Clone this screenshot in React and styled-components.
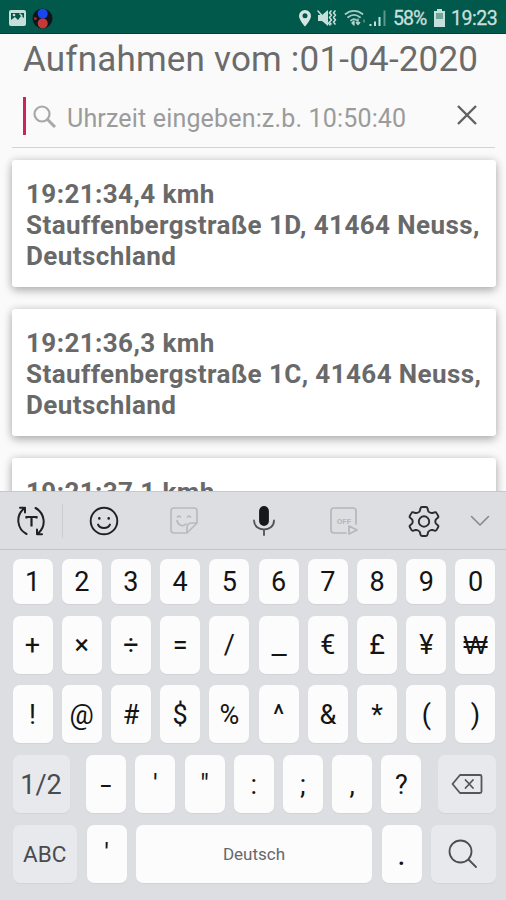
import React from "react"
import styled, { createGlobalStyle } from "styled-components"

const GlobalStyle = createGlobalStyle`
  * {
    box-sizing: border-box;
  }
  body {
    margin: 0;
    background: #fafafa;
    font-family: Roboto, "Noto Sans", sans-serif;
  }
`

const Screen = styled.div`
  width: 506px;
  height: 900px;
  display: flex;
  flex-direction: column;
  overflow: hidden;
  background: #fafafa;
`

const StatusBar = styled.header`
  flex: none;
  height: 34px;
  padding: 3px 9px 0 8px;
  display: flex;
  align-items: center;
  justify-content: space-between;
  background: #00594b;
  border-bottom: 1px solid #004439;
  color: #c9dfdb;
`

const StatusGroup = styled.div`
  display: flex;
  align-items: center;
`

const StatusText = styled.span`
  width: ${({ $width }) => $width}px;
  margin-left: ${({ $left }) => $left || 0}px;
  padding-top: 2px;
  font-size: 19.5px;
  line-height: 24px;
  letter-spacing: ${({ $spacing }) => $spacing || 0}px;
  white-space: nowrap;
  -webkit-text-stroke: 0.3px #c9dfdb;
`

const Icon = styled.svg`
  display: block;
  flex: none;
  fill: none;
  stroke-linecap: round;
  stroke-linejoin: round;
  margin-left: ${({ $left }) => $left || 0}px;
`

const Content = styled.main`
  flex: none;
  height: 457px;
  overflow: hidden;
`

const Title = styled.h1`
  margin: 0;
  height: 56px;
  padding: 5px 0 0 23px;
  font-size: 35px;
  font-weight: 400;
  line-height: 42px;
  letter-spacing: 0.2px;
  white-space: nowrap;
  color: #6b6b6b;
`

const SearchBar = styled.div`
  height: 58px;
  margin: 0 11px 0 12px;
  padding: 0 17px 7px 11px;
  display: flex;
  align-items: center;
  border-bottom: 1px solid #d3d3d3;
`

const Cursor = styled.span`
  width: 3px;
  height: 38px;
  margin-top: 2px;
  background: #cf2160;
`

const Placeholder = styled.span`
  flex: 1;
  margin-left: 10px;
  padding-top: 7px;
  font-size: 25px;
  line-height: 30px;
  letter-spacing: 0.17px;
  white-space: nowrap;
  color: #9b9b9b;
`

const List = styled.div`
  display: flex;
  flex-direction: column;
  gap: 22px;
  padding: 12px 10px 0 12px;
`

const Card = styled.article`
  flex: none;
  height: 127px;
  padding: 18.5px 0 0 14px;
  border-radius: 3px;
  background: #fff;
  box-shadow: 0 4px 10px rgba(0, 0, 0, 0.24), 0 0 8px rgba(0, 0, 0, 0.14);
  font-size: 26px;
  font-weight: 700;
  line-height: 31px;
  letter-spacing: 0.41px;
  white-space: nowrap;
  color: #696969;
`

const CardLine = styled.div`
  height: 31px;
`

const Keyboard = styled.section`
  flex: 1;
  position: relative;
  background: #dcdee2;
  border-top: 1px solid #c6c8cb;
`

const Toolbar = styled.div`
  height: 58px;
  padding: 0 15px;
  display: flex;
  align-items: center;
  border-bottom: 1px solid #c3c5c8;
`

const Divider = styled.span`
  width: 1px;
  height: 34px;
  margin-left: 15px;
  background: #cccfd2;
`

const Keys = styled.div`
  display: flex;
  flex-direction: column;
  gap: 11.5px;
  padding: 9px 10.5px 0 12.5px;
`

const KeyRow = styled.div`
  display: flex;
  justify-content: space-between;
  height: ${({ $height }) => $height || 58.2}px;
`

const Key = styled.div`
  width: ${({ $width }) => $width || 40}px;
  display: flex;
  align-items: center;
  justify-content: center;
  border-radius: 7px;
  background: ${({ $muted }) => ($muted ? "#e8e9ed" : "#fcfcfc")};
  box-shadow: 0 1px 1px rgba(0, 0, 0, 0.05);
  color: ${({ $color }) => $color || "#141414"};
  font-size: ${({ $size }) => $size || 27}px;
  line-height: 1.2;
`

const Glyph = styled.span`
  padding-top: ${({ $drop }) => $drop || 2}px;
  font-family: ${({ $font }) => $font || "inherit"};
  font-size: ${({ $size }) => ($size ? `${$size}px` : "inherit")};
  transform: scaleX(${({ $stretch }) => $stretch || 1});
`

const KeyGroup = styled.div`
  display: flex;
  gap: 9.2px;
`

const entries = [
  ["19:21:34,4 kmh", "Stauffenbergstraße 1D, 41464 Neuss,", "Deutschland"],
  ["19:21:36,3 kmh", "Stauffenbergstraße 1C, 41464 Neuss,", "Deutschland"],
  ["19:21:37,1 kmh"],
]

const digits = ["1", "2", "3", "4", "5", "6", "7", "8", "9", "0"]
const operators = ["+", "×", "÷", "=", "/", "_", "€", "£", "¥", "₩"]
const symbols = ["!", "@", "#", "$", "%", "^", "&", "*", "(", ")"]
const punctuation = ["-", "'", "\"", ":", ";", ",", "?"]

// characters that need a different cut than the rest of the keys
const glyphs = {
  "_": { $stretch: 1.25 },
  "-": { $stretch: 1.5 },
  "₩": { $font: "\"Liberation Sans\"", $size: 26 },
}

const CharKey = ({ char }) => (
  <Key>
    <Glyph {...glyphs[char]}>{char}</Glyph>
  </Key>
)

const Status = () => (
  <StatusBar>
    <StatusGroup>
      <Icon width="19" height="18" viewBox="0 0 19 18">
        <rect x="1" y="1" width="17" height="16" rx="2" fill="#c5dfda" />
        <path d="M3 4h13v5l-3-2-3 4-3-3-4 3z" fill="#075548" />
        <circle cx="6" cy="6" r="1.3" fill="#c5dfda" />
        <path d="M12 5l2 2" stroke="#c5dfda" strokeWidth="1.4" />
      </Icon>
      <Icon width="21" height="21" viewBox="0 0 21 21" $left={5}>
        <circle cx="10.5" cy="10.5" r="10" fill="#14131c" />
        <circle cx="10.7" cy="5.7" r="5" fill="#1747f0" />
        <circle cx="10.7" cy="15.4" r="5" fill="#c53a38" />
        <circle cx="3.3" cy="10.4" r="1.5" fill="#9a2c2a" />
      </Icon>
    </StatusGroup>
    <StatusGroup>
      <Icon width="14" height="18" viewBox="0 0 14 18">
        <path
          d="M7 1a6 6 0 0 0-6 6c0 4 6 10.500 6 10.500s6-6.500 6-10.500a6 6 0 0 0-6-6zm0 3.300a2.500 2.500 0 1 1 0 5 2.500 2.500 0 0 1 0-5z"
          fill="#d4e6e3"
          fillRule="evenodd"
        />
      </Icon>
      <Icon width="20" height="18" viewBox="0 0 20 18" $left={5}>
        <path d="M1 6h4l6-5v16l-6-5H1z" fill="#c5dfda" />
        <path d="M1 2l12 14" stroke="#c5dfda" strokeWidth="1.500" />
        <path d="M14 2l-1.500 2 2 2-2 2.500 2 2.500-2 2 1.500 2M18 2l-1.500 2 2 2-2 2.500 2 2.500-2 2 1.500 2" stroke="#c5dfda" strokeWidth="1.600" />
      </Icon>
      <Icon width="22" height="18" viewBox="0 0 22 18" $left={7}>
        <path d="M1.500 5c5-4.300 12-4.300 17 0M4 8.300c4-3.300 8-3.300 12 0M7 11.500c2-1.800 4-1.800 6 0" stroke="#a5cac3" strokeWidth="1.800" />
        <path d="M10 12l-2 2 2 2zM14 10v5M12.300 13.500L14 15.500l1.700-2" stroke="#b5d5cf" strokeWidth="1.300" fill="#b5d5cf" />
        <path d="M20 11v2" stroke="#5b978c" strokeWidth="1.500" />
      </Icon>
      <Icon width="18" height="18" viewBox="0 0 18 18" $left={3}>
        <path d="M1.500 15v2M6 12.500V17M10.500 8v9" stroke="#c5dfda" strokeWidth="2" strokeLinecap="butt" />
        <path d="M15.500 1.500V17" stroke="#5b978c" strokeWidth="2" strokeLinecap="butt" />
      </Icon>
      <StatusText $width={33} $left={6} $spacing={-1}>58%</StatusText>
      <Icon width="13" height="18" viewBox="0 0 13 18" $left={7}>
        <path d="M4 0h5v2h3v16H1V2h3z" fill="#c5dfda" />
        <path d="M3 4h7v6H3z" fill="#72a69d" />
      </Icon>
      <StatusText $width={46} $left={5} $spacing={-0.45}>19:23</StatusText>
    </StatusGroup>
  </StatusBar>
)

const KeyboardTools = () => (
  <Toolbar>
    <Icon width="32" height="32" viewBox="0 0 32 32" stroke="#202124" strokeWidth="2">
      <path d="M11.500 29C2 24 .500 11 8.500 4M5 2.800h5v4.700" />
      <path d="M20.500 3c9.500 5 11 18 3 25M27 29.200h-5v-4.700" />
      <path d="M11.500 13.500V12h10v1.500M16.500 12v9.500" strokeLinecap="butt" strokeLinejoin="miter" strokeWidth="2.200" />
    </Icon>
    <Divider />
    <Icon width="30" height="30" viewBox="0 0 30 30" stroke="#202124" strokeWidth="1.900" $left={26}>
      <circle cx="15" cy="15" r="13.300" />
      <path d="M9 18.500c2 4.600 10 4.600 12 0" />
      <path d="M10.300 12.200v.3M19.700 12.200v.3" strokeWidth="2.600" />
    </Icon>
    <Icon width="30" height="30" viewBox="0 0 30 30" stroke="#b8babe" strokeWidth="1.700" $left={50}>
      <path d="M5 2h20q3 0 3 3v12L18 27H5q-3 0-3-3V5q0-3 3-3zM28 17h-5q-5 0-5 5v5" />
      <path d="M8 14.500c1 5 6 6.500 9 3.500M8.500 11q1.500-2 3 0M18.500 11q1.500-2 3 0" />
    </Icon>
    <Icon width="24" height="32" viewBox="0 0 24 32" stroke="#505256" strokeWidth="1.800" $left={53}>
      <rect x="8" y="2" width="8" height="18" rx="4" fill="#17181a" stroke="#17181a" />
      <path d="M2 15.500c0 12 20 12 20 0M12 25v5" />
    </Icon>
    <Icon width="30" height="30" viewBox="0 0 30 30" stroke="#b5b7bb" strokeWidth="1.700" $left={53}>
      <path d="M17 27H5q-3 0-3-3V5q0-3 3-3h19q3 0 3 3v13M20 20v8l8-4z" />
      <text x="15" y="17.500" textAnchor="middle" fontSize="8" fontWeight="700" fill="#b5b7bb" stroke="none">OFF</text>
    </Icon>
    <Icon width="32" height="32" viewBox="0 0 32 32" stroke="#2b2c2f" strokeWidth="1.900" $left={49}>
      <path d="M14 2h4q1.300 0 1.500 1.300l.6 2.500q.5 1 1.800 1.700t2.500.5l2.300-.7q1.300-.3 1.900.8l1.500 2.600q.7 1.200-.3 2l-1.800 1.700q-.7.900-.7 2.100t.7 2.100l1.800 1.700q1 .8.3 2l-1.500 2.600q-.6 1.100-1.900.8l-2.300-.7q-1.200-.2-2.500.5t-1.800 1.700l-.6 2.500Q19.300 31 18 31h-4q-1.300 0-1.500-1.300l-.6-2.500q-.5-1-1.800-1.700t-2.500-.5l-2.300.7q-1.300.3-1.900-.8l-1.500-2.600q-.7-1.200.3-2L4 18.600q.7-.9.7-2.100T4 14.400l-1.800-1.700q-1-.8-.3-2l1.500-2.600q.6-1.100 1.900-.8l2.300.7q1.200.2 2.500-.5t1.800-1.700l.6-2.500Q12.700 2 14 2z" />
      <circle cx="16" cy="16.500" r="5.200" />
    </Icon>
    <Icon width="20" height="12" viewBox="0 0 20 12" stroke="#87898d" strokeWidth="1.600" $left={30}>
      <path d="M1.500 1.500L10 10l8.500-8.500" />
    </Icon>
  </Toolbar>
)

const App = () => (
  <>
    <GlobalStyle />
    <Screen>
      <Status />
      <Content>
        <Title>Aufnahmen vom :01-04-2020</Title>
        <SearchBar>
          <Cursor />
          <Icon width="24" height="25" viewBox="0 0 24 25" stroke="#a8a8a8" strokeWidth="2.200" $left={7}>
            <circle cx="9" cy="11" r="7.500" />
            <path d="M14.500 16.500l7.500 7.500" strokeWidth="3" strokeLinecap="butt" />
          </Icon>
          <Placeholder>Uhrzeit eingeben:z.b. 10:50:40</Placeholder>
          <Icon width="22" height="22" viewBox="0 0 22 22" stroke="#606060" strokeWidth="2.400">
            <path d="M2 2l18 18M20 2L2 20" strokeLinecap="butt" />
          </Icon>
        </SearchBar>
        <List>
          {entries.map(lines => (
            <Card key={lines[0]}>
              {lines.map(line => (
                <CardLine key={line}>{line}</CardLine>
              ))}
            </Card>
          ))}
        </List>
      </Content>
      <Keyboard>
        <KeyboardTools />
        <Keys>
          <KeyRow $height={45}>
            {digits.map(char => <CharKey key={char} char={char} />)}
          </KeyRow>
          <KeyRow>
            {operators.map(char => <CharKey key={char} char={char} />)}
          </KeyRow>
          <KeyRow>
            {symbols.map(char => <CharKey key={char} char={char} />)}
          </KeyRow>
          <KeyRow>
            <Key $muted $width={57} $color="#4a4b4e"><Glyph>1/2</Glyph></Key>
            <KeyGroup>
              {punctuation.map(char => <CharKey key={char} char={char} />)}
            </KeyGroup>
            <Key $muted $width={57.5}>
              <Icon width="32" height="22" viewBox="0 0 32 22" stroke="#55565a" strokeWidth="1.800">
                <path d="M9 2h20q1.500 0 1.500 1.500v15q0 1.500-1.500 1.500H9l-7.500-9z" />
                <path d="M14.500 7l7.500 8M22 7l-7.500 8" />
              </Icon>
            </Key>
          </KeyRow>
          <KeyRow>
            <Key $muted $width={64.5} $size={22.5} $color="#4a4b4e"><Glyph>ABC</Glyph></Key>
            <Key><Glyph>'</Glyph></Key>
            <Key $width={236} $size={17} $color="#66676a"><Glyph>Deutsch</Glyph></Key>
            <Key $size={32}><Glyph>.</Glyph></Key>
            <Key $muted $width={64.5}>
              <Icon width="30" height="30" viewBox="0 0 30 30" stroke="#4d4e52" strokeWidth="1.800">
                <circle cx="12.500" cy="12.500" r="11" />
                <path d="M20.500 20.500L28 28" />
              </Icon>
            </Key>
          </KeyRow>
        </Keys>
      </Keyboard>
    </Screen>
  </>
)

export default App
